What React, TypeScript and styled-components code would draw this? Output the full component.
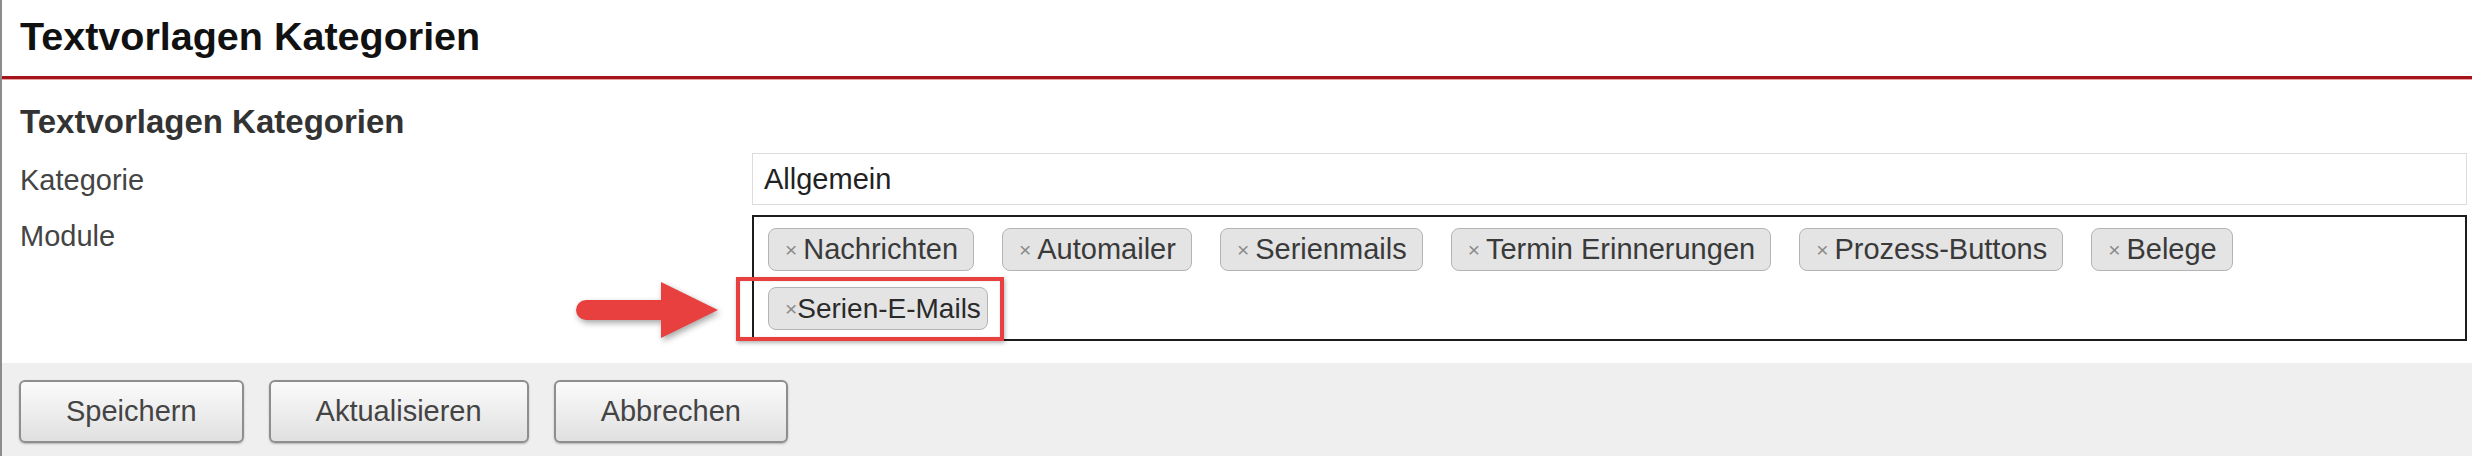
import React from "react";
import styled, { createGlobalStyle } from "styled-components";

const GlobalStyle = createGlobalStyle`
  html, body { margin: 0; padding: 0; background: #ffffff; }
  body { font-family: "Liberation Sans", Arial, sans-serif; }
  * { box-sizing: border-box; }
`;

const Page = styled.div`
  width: 2472px;
  height: 456px;
  border-left: 2px solid #8c8c8c;
  display: flex;
  flex-direction: column;
  overflow: hidden;
`;

const Header = styled.header`
  height: 79px;
  padding: 0 0 0 18px;
  border-bottom: 3px solid #a4151b;
  box-shadow: 0 1px 0 #e9a3a5;
`;

const Title = styled.h1`
  margin: 0;
  font-size: 39.5px;
  line-height: 73px;
  font-weight: 700;
  color: #111;
`;

const Section = styled.section`
  flex: 0 0 auto;
  padding: 25px 5px 22px 18px;
  display: flex;
  flex-direction: column;
`;

const SubTitle = styled.h2`
  margin: 0 0 13px 0;
  font-size: 33px;
  line-height: 36px;
  font-weight: 700;
  color: #333;
`;

const FormRow = styled.div<{ $gap?: number }>`
  display: grid;
  grid-template-columns: 732px 1fr;
  align-items: start;
  margin-bottom: ${(p) => p.$gap ?? 0}px;
`;

const Label = styled.label<{ $pt: number }>`
  padding-top: ${(p) => p.$pt}px;
  font-size: 29px;
  line-height: 32px;
  color: #444;
`;

const TextInput = styled.div`
  height: 52px;
  border: 1px solid #dcdcdc;
  padding-left: 11px;
  font-size: 29px;
  line-height: 50px;
  color: #222;
  background: #fff;
`;

const TagBox = styled.div`
  height: 126px;
  border: 2px solid #1c1c1c;
  padding: 11px 10px 0 14px;
  display: flex;
  flex-wrap: wrap;
  align-content: flex-start;
  column-gap: 28px;
  row-gap: 16px;
`;

const Tag = styled.span<{ $tight?: boolean }>`
  position: relative;
  display: inline-flex;
  align-items: center;
  height: 43px;
  padding: 0 ${(p) => (p.$tight ? 6 : 15)}px 0 ${(p) => (p.$tight ? 16 : 16)}px;
  border: 1px solid #b4b4b4;
  border-radius: 8px;
  background: #e4e4e4;
  font-size: ${(p) => (p.$tight ? 28 : 29)}px;
  color: ${(p) => (p.$tight ? "#2a2a2a" : "#3a3a3a")};
  white-space: nowrap;
`;

const Remove = styled.span<{ $tight?: boolean }>`
  font-size: 21px;
  color: #8a8a8a;
  margin-right: ${(p) => (p.$tight ? 0 : 6)}px;
  line-height: 1;
`;

const Highlight = styled.span`
  position: absolute;
  left: -33px;
  top: -11px;
  width: 268px;
  height: 64px;
  border: 4px solid #e8403f;
  box-shadow: 1px 2px 4px rgba(0, 0, 0, 0.3), inset 0 0 2px rgba(0, 0, 0, 0.15);
  pointer-events: none;
`;

const Arrow = styled.svg`
  position: absolute;
  left: -193px;
  top: -6px;
  width: 142px;
  height: 56px;
  overflow: visible;
  filter: drop-shadow(2px 3px 3px rgba(0, 0, 0, 0.35));
`;

const Footer = styled.footer`
  flex: 1 1 auto;
  background: #efefef;
  padding: 17px 0 0 17px;
  display: flex;
  gap: 25px;
  align-items: flex-start;
`;

const Button = styled.button`
  height: 63px;
  padding: 0 45px;
  border: 2px solid #8e8e8e;
  border-radius: 6px;
  background: linear-gradient(#fbfbfb, #e0e0e0);
  box-shadow: 0 1px 2px rgba(0, 0, 0, 0.25);
  font-family: "Liberation Sans", Arial, sans-serif;
  font-size: 29px;
  color: #444;
  cursor: pointer;
`;

const modules = [
  "Nachrichten",
  "Automailer",
  "Serienmails",
  "Termin Erinnerungen",
  "Prozess-Buttons",
  "Belege",
];

export default function App() {
  return (
    <>
      <GlobalStyle />
      <Page>
        <Header>
          <Title>Textvorlagen Kategorien</Title>
        </Header>
        <Section>
          <SubTitle>Textvorlagen Kategorien</SubTitle>
          <FormRow $gap={10}>
            <Label $pt={11}>Kategorie</Label>
            <TextInput>Allgemein</TextInput>
          </FormRow>
          <FormRow>
            <Label $pt={5}>Module</Label>
            <TagBox>
              {modules.map((m) => (
                <Tag key={m}>
                  <Remove>×</Remove>
                  {m}
                </Tag>
              ))}
              <Tag $tight>
                <Remove $tight>×</Remove>
                Serien-E-Mails
                <Highlight />
                <Arrow viewBox="0 0 142 56">
                  <rect x="0" y="18" width="96" height="20" rx="10" fill="#e8403f" />
                  <polygon points="85,0 142,28 85,56" fill="#e8403f" />
                </Arrow>
              </Tag>
            </TagBox>
          </FormRow>
        </Section>
        <Footer>
          <Button>Speichern</Button>
          <Button>Aktualisieren</Button>
          <Button>Abbrechen</Button>
        </Footer>
      </Page>
    </>
  );
}
